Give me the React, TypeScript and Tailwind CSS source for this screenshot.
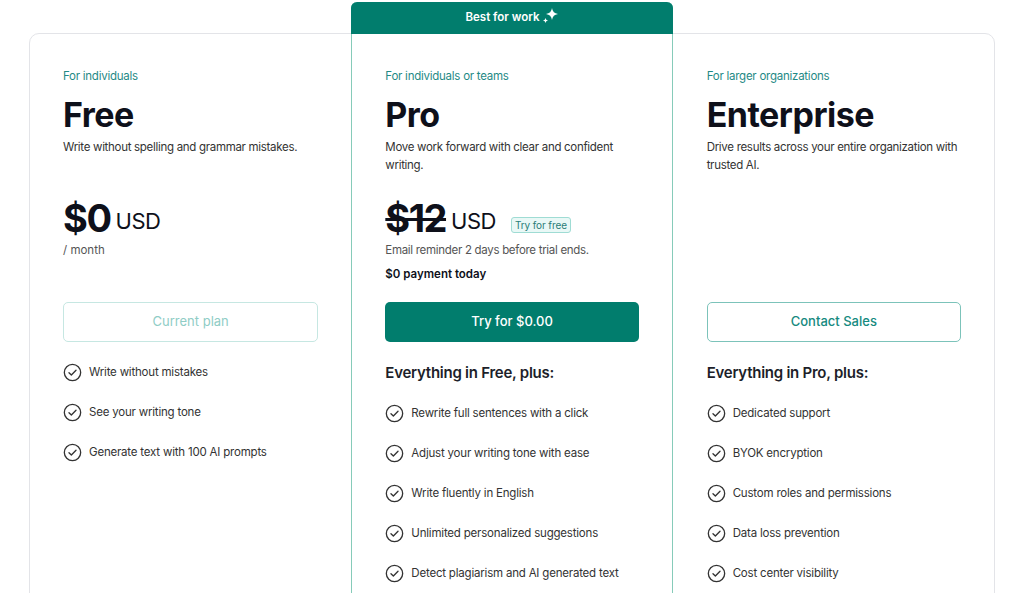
import React from "react";

const freeFeatures = ["Write without mistakes", "See your writing tone", "Generate text with 100 AI prompts"];

const proFeatures = [
  "Rewrite full sentences with a click",
  "Adjust your writing tone with ease",
  "Write fluently in English",
  "Unlimited personalized suggestions",
  "Detect plagiarism and AI generated text",
];

const entFeatures = [
  "Dedicated support",
  "BYOK encryption",
  "Custom roles and permissions",
  "Data loss prevention",
  "Cost center visibility",
];

function CheckCircle() {
  return (
    <svg width="19" height="19" viewBox="0 0 20 20" fill="none" className="shrink-0">
      <circle cx="10" cy="10" r="8.6" stroke="#333" strokeWidth="1.4" />
      <path d="M6.3 10.2l2.5 2.5 4.9-5" stroke="#333" strokeWidth="1.4" strokeLinecap="round" strokeLinejoin="round" />
    </svg>
  );
}

function Sparkles() {
  return (
    <svg width="18" height="18" viewBox="0 0 18 18" fill="white" className="-mt-[5px]">
      <path d="M11 1 Q11.7 6.3 17 7 Q11.7 7.7 11 13 Q10.3 7.7 5 7 Q10.3 6.3 11 1Z" />
      <path d="M4.5 11 Q4.8 13.2 7 13.5 Q4.8 13.8 4.5 16 Q4.2 13.8 2 13.5 Q4.2 13.2 4.5 11Z" />
    </svg>
  );
}

function FeatureList({ items }: { items: string[] }) {
  return (
    <ul className="flex flex-col gap-[21px]">
      {items.map((f) => (
        <li key={f} className="flex items-center gap-[7px] text-[11.5px] tracking-[-0.2px] text-[#333] h-[19px]">
          <CheckCircle />
          <span>{f}</span>
        </li>
      ))}
    </ul>
  );
}

function Head({ label, title, desc }: { label: string; title: string; desc: string }) {
  return (
    <>
      <p className="text-[11.5px] tracking-[-0.25px] text-[#1f8a86] h-[14px] leading-[14px]">{label}</p>
      <h2 className="mt-[12px] text-[34px] leading-[40px] font-bold tracking-[-0.5px] text-[#0e101a]">{title}</h2>
      <p className="mt-[3px] h-[36px] text-[11.5px] leading-[18px] tracking-[-0.3px] text-[#333]">{desc}</p>
    </>
  );
}

export default function App() {
  return (
    <div className="h-[593px] overflow-hidden bg-white pt-[2px]" style={{ fontFamily: "Inter, 'Noto Sans', sans-serif" }}>
      <div className="mx-auto mt-[31px] w-[966px] rounded-[10px] border border-[#e3e4e8] grid grid-cols-3">
        {/* Free */}
        <div className="pl-[33px] pr-[33px] pt-[35px] pb-10">
          <Head label="For individuals" title="Free" desc="Write without spelling and grammar mistakes." />
          <div className="mt-[23px] h-[105px]">
            <div className="h-[42px] flex items-end gap-[5px] text-[#0e101a]">
              <span className="text-[38px] leading-[42px] font-bold tracking-[-1.5px]">$0</span>
              <span className="text-[22px] leading-[36px] tracking-[-0.5px]">USD</span>
            </div>
            <p className="mt-[3px] text-[11.5px] leading-[16px] text-[#555]">/ month</p>
          </div>
          <button className="w-full h-[40px] rounded-[5px] border border-[#c6e7e2] text-[13px] text-[#8fcdc6]">
            Current plan
          </button>
          <div className="mt-[21px]">
            <FeatureList items={freeFeatures} />
          </div>
        </div>

        {/* Pro */}
        <div className="-mt-[32px] -mb-px rounded-t-[6px] border border-t-0 border-[#86cbb9] bg-white">
          <div className="h-[32px] -mx-px rounded-t-[6px] bg-[#017d6d] flex items-center justify-center gap-[1px] text-white text-[11.5px] font-semibold">
            <span>Best for work</span>
            <Sparkles />
          </div>
          <div className="px-[33px] pt-[35px] pb-10">
            <Head label="For individuals or teams" title="Pro" desc="Move work forward with clear and confident writing." />
            <div className="mt-[23px] h-[105px]">
              <div className="h-[42px] flex items-end gap-[5px] text-[#0e101a]">
                <span className="text-[38px] leading-[42px] font-bold tracking-[-1.5px] line-through decoration-[3px]">$12</span>
                <span className="text-[22px] leading-[36px] tracking-[-0.5px]">USD</span>
                <span className="ml-[10px] mb-[6px] rounded-[3px] border border-[#9fdcd4] bg-[#e9f8f6] px-[3px] text-[10px] leading-[14px] tracking-[-0.1px] text-[#2a7d78]">
                  Try for free
                </span>
              </div>
              <p className="mt-[3px] text-[11.5px] leading-[16px] tracking-[-0.3px] text-[#555]">Email reminder 2 days before trial ends.</p>
              <p className="mt-[8px] text-[11.5px] leading-[16px] font-semibold text-[#0e101a]">$0 payment today</p>
            </div>
            <button className="w-full h-[40px] rounded-[5px] bg-[#017d6d] text-[13px] font-medium text-white">
              Try for $0.00
            </button>
            <h3 className="mt-[20px] text-[15px] leading-[22px] font-semibold tracking-[-0.25px] text-[#1d1f2a]">Everything in Free, plus:</h3>
            <div className="mt-[20px]">
              <FeatureList items={proFeatures} />
            </div>
          </div>
        </div>

        {/* Enterprise */}
        <div className="pl-[34px] pr-[33px] pt-[35px] pb-10">
          <Head label="For larger organizations" title="Enterprise" desc="Drive results across your entire organization with trusted AI." />
          <div className="mt-[23px] h-[105px]" />
          <button className="w-full h-[40px] rounded-[5px] border border-[#7cc3ba] text-[13px] font-medium text-[#168a7f]">
            Contact Sales
          </button>
          <h3 className="mt-[20px] text-[15px] leading-[22px] font-semibold tracking-[-0.25px] text-[#1d1f2a]">Everything in Pro, plus:</h3>
          <div className="mt-[20px]">
            <FeatureList items={entFeatures} />
          </div>
        </div>
      </div>
    </div>
  );
}
